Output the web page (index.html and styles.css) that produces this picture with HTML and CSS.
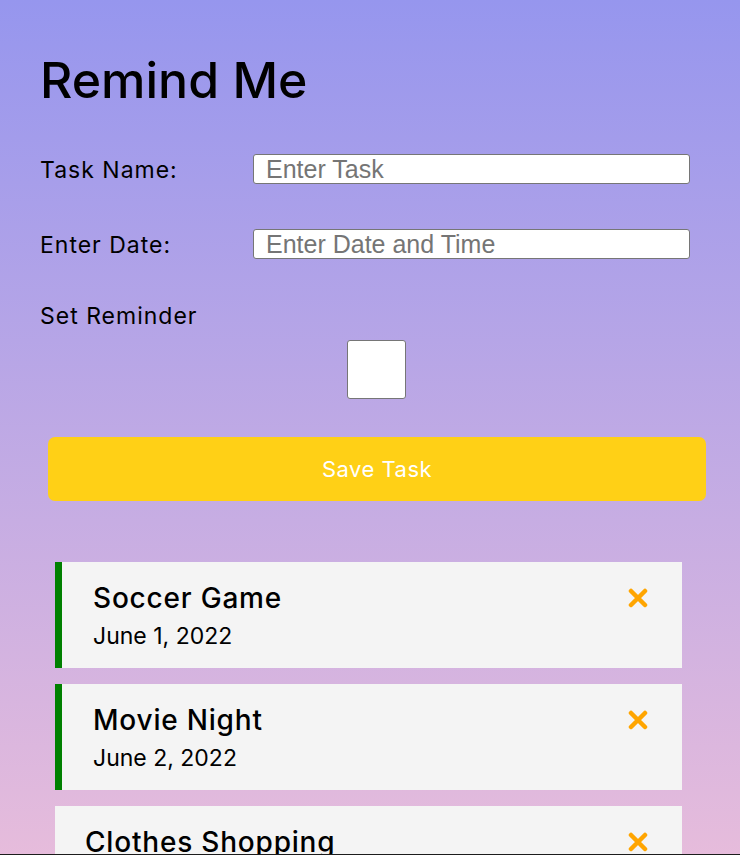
FILE: index.html
```html
<!DOCTYPE html>
<html lang="en">
<head>
    <meta charset="UTF-8">
    <meta name="viewport" content="width=device-width, initial-scale=1.0">
    <title>Remind Me</title>
    <link rel="stylesheet" href="styles.css">
</head>
<body>
    <div class="container">
        <h1 class="title">Remind Me</h1>

        <!-- Add task form -->
        <form class="add-form">
            <div class="form-control">
                <label>Task Name:</label>
                <input type="text" placeholder="Enter Task">
            </div>
            <div class="form-control">
                <label>Enter Date:</label>
                <input type="text" placeholder="Enter Date and Time">
            </div>
            <div class="form-control form-control-check">
                <label>Set Reminder</label>
                <input type="checkbox">
            </div>
            <button type="button" class="btn">Save Task</button>
        </form>

        <!-- Task list -->
        <div class="tasks">
            <div class="task reminder">
                <div class="task-body">
                    <h3>Soccer Game</h3>
                    <p>June 1, 2022</p>
                </div>
                <svg class="delete" viewBox="0 0 20 20"><path d="M3 3L17 17M17 3L3 17"/></svg>
            </div>
            <div class="task reminder">
                <div class="task-body">
                    <h3>Movie Night</h3>
                    <p>June 2, 2022</p>
                </div>
                <svg class="delete" viewBox="0 0 20 20"><path d="M3 3L17 17M17 3L3 17"/></svg>
            </div>
            <div class="task">
                <div class="task-body">
                    <h3>Clothes Shopping</h3>
                    <p>June 3, 2022</p>
                </div>
                <svg class="delete" viewBox="0 0 20 20"><path d="M3 3L17 17M17 3L3 17"/></svg>
            </div>
        </div>
    </div>
</body>
</html>
```

FILE: styles.css
```css
* {
    box-sizing: border-box;
}

body {
    margin: 0;
    padding: 0;
    min-height: 100vh;
    background: linear-gradient(to bottom, #9696ee 0%, #edbfda 100%);
    font-family: 'Inter', sans-serif;
    color: #000;
    overflow: hidden;
}

/* thin dark edge along the bottom of the window */
body::after {
    content: "";
    position: fixed;
    left: 0;
    right: 0;
    bottom: 0;
    height: 1px;
    background: #1c1c1c;
}

.container {
    padding: 0 34px 0 40px;
}

.title {
    margin: 0;
    padding-top: 49px;
    font-size: 50px;
    font-weight: 500;
    line-height: 62px;
}

/* Form */
.add-form {
    margin-top: 43px;
}

.form-control {
    display: flex;
    align-items: center;
    margin-bottom: 45px;
}

.form-control + .form-control {
    margin-bottom: 40px;
}

.form-control label {
    flex: 0 0 213px;
    margin-top: 3px;
    font-size: 23px;
    line-height: 27px;
    letter-spacing: 1px;
}

.form-control input {
    flex: 0 0 437px;
    height: 30px;
    padding: 0 12px;
    border: 1px solid #767676;
    border-radius: 3px;
    background: #fff;
    font-family: 'Liberation Sans', Arial, sans-serif;
    font-size: 25px;
    line-height: 28px;
}

.form-control input::placeholder {
    color: #757575;
}

.form-control-check {
    flex-direction: column;
    align-items: stretch;
}

.form-control.form-control-check {
    margin-bottom: 38px;
}

.form-control-check label {
    flex: none;
    margin-top: 0;
    line-height: 34px;
}

.form-control-check input {
    flex: none;
    align-self: center;
    width: 59px;
    height: 59px;
    margin: 7px 0 0 7px;
    padding: 0;
    appearance: none;
    border-radius: 3px;
}

.btn {
    display: block;
    width: 658px;
    height: 64px;
    margin-left: 8px;
    border: none;
    border-radius: 7px;
    background: #ffd016;
    color: #fff;
    font-family: 'Inter', sans-serif;
    font-size: 22px;
    letter-spacing: 0.5px;
    cursor: pointer;
}

/* Tasks */
.tasks {
    margin: 61px 24px 0 15px;
}

.task {
    display: flex;
    justify-content: space-between;
    align-items: flex-start;
    height: 106px;
    margin-bottom: 16px;
    padding: 18px 34px 0 30px;
    background: #f4f4f4;
}

.task.reminder {
    border-left: 7px solid green;
    padding-left: 31px;
}

.task h3 {
    margin: 0;
    font-size: 28px;
    font-weight: 500;
    letter-spacing: 0.8px;
    line-height: 36px;
}

.task p {
    margin: 4px 0 0;
    font-size: 23px;
    line-height: 32px;
}

.delete {
    width: 20px;
    height: 20px;
    margin-top: 8px;
    fill: none;
    stroke: orange;
    stroke-width: 4.5;
    stroke-linecap: round;
    cursor: pointer;
}
```
